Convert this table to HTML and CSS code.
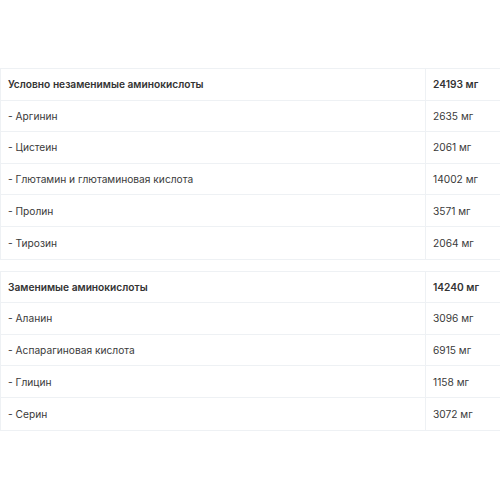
FILE: index.html
```html
<!DOCTYPE html>
<html lang="ru">
<head>
<meta charset="utf-8">
<link rel="stylesheet" href="styles.css">
</head>
<body>
<div class="page">
  <div class="table">
    <div class="row head"><div class="name">Условно незаменимые аминокислоты</div><div class="val">24193 мг</div></div>
    <div class="row"><div class="name">- Аргинин</div><div class="val">2635 мг</div></div>
    <div class="row"><div class="name">- Цистеин</div><div class="val">2061 мг</div></div>
    <div class="row"><div class="name">- Глютамин и глютаминовая кислота</div><div class="val">14002 мг</div></div>
    <div class="row"><div class="name">- Пролин</div><div class="val">3571 мг</div></div>
    <div class="row"><div class="name">- Тирозин</div><div class="val">2064 мг</div></div>
  </div>
  <div class="table">
    <div class="row head"><div class="name">Заменимые аминокислоты</div><div class="val">14240 мг</div></div>
    <div class="row"><div class="name">- Аланин</div><div class="val">3096 мг</div></div>
    <div class="row"><div class="name">- Аспарагиновая кислота</div><div class="val">6915 мг</div></div>
    <div class="row"><div class="name">- Глицин</div><div class="val">1158 мг</div></div>
    <div class="row"><div class="name">- Серин</div><div class="val">3072 мг</div></div>
  </div>
</div>
</body>
</html>
```
FILE: styles.css
```css
html, body {
  margin: 0;
  padding: 0;
  background: #fff;
  overflow: hidden;
}
.page {
  width: 520px;
  padding-top: 68px;
  display: flex;
  flex-direction: column;
  gap: 11px;
  font-family: Inter, "Noto Sans", sans-serif;
  font-size: 10.2px;
  color: #3a3a3a;
}
.table {
  border: 1px solid #eef1f4;
  border-right: none;
}
.row {
  display: grid;
  grid-template-columns: 424px 1fr;
  height: 31.6px;
  box-sizing: border-box;
  border-bottom: 1px solid #eef1f4;
}
.row:last-child {
  border-bottom: none;
}
.name, .val {
  display: flex;
  align-items: center;
  padding: 0 7px;
}
.val {
  border-left: 1px solid #eef1f4;
}
.head {
  font-weight: 600;
  color: #333;
}
```
